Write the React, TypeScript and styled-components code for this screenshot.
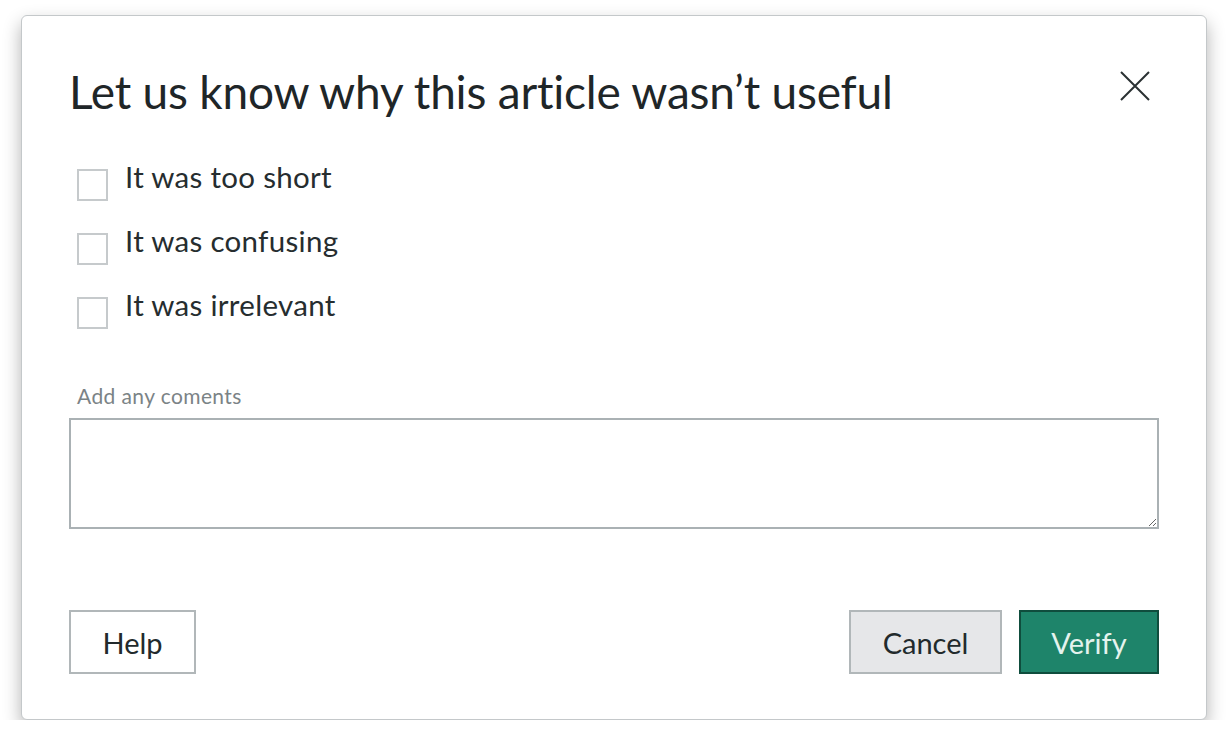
import React from "react";
import styled, { createGlobalStyle } from "styled-components";

const Global = createGlobalStyle`
  html, body { margin: 0; padding: 0; background: #ffffff; }
  body { font-family: Lato, "Noto Sans", sans-serif; }
  * { box-sizing: border-box; }
`;

const Page = styled.div`
  padding: 15px 19px 0 21px;
`;

const Dialog = styled.div`
  height: 705px;
  background: #fff;
  border: 1px solid #c4c8ca;
  border-radius: 6px;
  box-shadow: 0 8px 18px rgba(0, 0, 0, 0.3);
  padding: 48px 47px 0 47px;
  display: flex;
  flex-direction: column;
`;

const Header = styled.div`
  display: flex;
  justify-content: space-between;
  align-items: flex-start;
`;

const Title = styled.h1`
  margin: 0;
  font-family: Lato, sans-serif;
  font-weight: 400;
  font-size: 46px;
  line-height: 56px;
  color: #1f2628;
  letter-spacing: -0.2px;
`;

const CloseButton = styled.button`
  margin: 7px 9px 0 0;
  width: 30px;
  height: 30px;
  padding: 0;
  border: none;
  background: none;
  display: flex;
  cursor: pointer;
`;

const Options = styled.div`
  margin: 49px 0 0 8px;
  display: flex;
  flex-direction: column;
  gap: 32px;
`;

const Option = styled.label`
  display: flex;
  align-items: flex-start;
  gap: 17px;
`;

const Box = styled.span`
  width: 31px;
  height: 32px;
  border: 2px solid #c6cacc;
  background: #fff;
  flex: none;
`;

const OptionText = styled.span`
  font-family: Lato, sans-serif;
  font-size: 29.5px;
  line-height: 16px;
  letter-spacing: 0.3px;
  color: #262d2f;
`;

const CommentLabel = styled.div`
  margin: 56px 0 0 8px;
  font-family: Lato, sans-serif;
  font-size: 21px;
  line-height: 22px;
  letter-spacing: 0.4px;
  color: #7b8386;
`;

const TextArea = styled.textarea`
  margin-top: 11px;
  width: 100%;
  height: 111px;
  border: 2px solid #aab1b4;
  border-radius: 0;
  outline: none;
  font-family: Lato, sans-serif;
  font-size: 20px;
  resize: both;
  display: block;
`;

const Footer = styled.div`
  margin-top: 81px;
  display: flex;
  align-items: center;
`;

const Spacer = styled.div`
  flex: 1;
`;

const Button = styled.button<{ $variant: "outline" | "secondary" | "primary"; $w: number }>`
  height: 64px;
  width: ${(p) => p.$w}px;
  font-family: Lato, sans-serif;
  font-size: 29px;
  padding: 0;
  cursor: pointer;
  border: 2px solid
    ${(p) => (p.$variant === "primary" ? "#0f4d3d" : "#b1b7b9")};
  background: ${(p) =>
    p.$variant === "primary" ? "#1e846a" : p.$variant === "secondary" ? "#e6e7e9" : "#ffffff"};
  color: ${(p) => (p.$variant === "primary" ? "#e4f3ee" : "#222a2c")};
  margin-left: ${(p) => (p.$variant === "primary" ? "17px" : "0")};
`;

export default function App() {
  return (
    <>
      <Global />
      <Page>
        <Dialog>
          <Header>
            <Title>Let us know why this article wasn’t useful</Title>
            <CloseButton aria-label="Close">
              <svg width="30" height="30" viewBox="0 0 30 30">
                <path d="M1 1 L29 29 M29 1 L1 29" stroke="#2a3133" strokeWidth="2" fill="none" />
              </svg>
            </CloseButton>
          </Header>
          <Options>
            {["It was too short", "It was confusing", "It was irrelevant"].map((t) => (
              <Option key={t}>
                <Box />
                <OptionText>{t}</OptionText>
              </Option>
            ))}
          </Options>
          <CommentLabel>Add any coments</CommentLabel>
          <TextArea />
          <Footer>
            <Button $variant="outline" $w={127}>Help</Button>
            <Spacer />
            <Button $variant="secondary" $w={153}>Cancel</Button>
            <Button $variant="primary" $w={140}>Verify</Button>
          </Footer>
        </Dialog>
      </Page>
    </>
  );
}
